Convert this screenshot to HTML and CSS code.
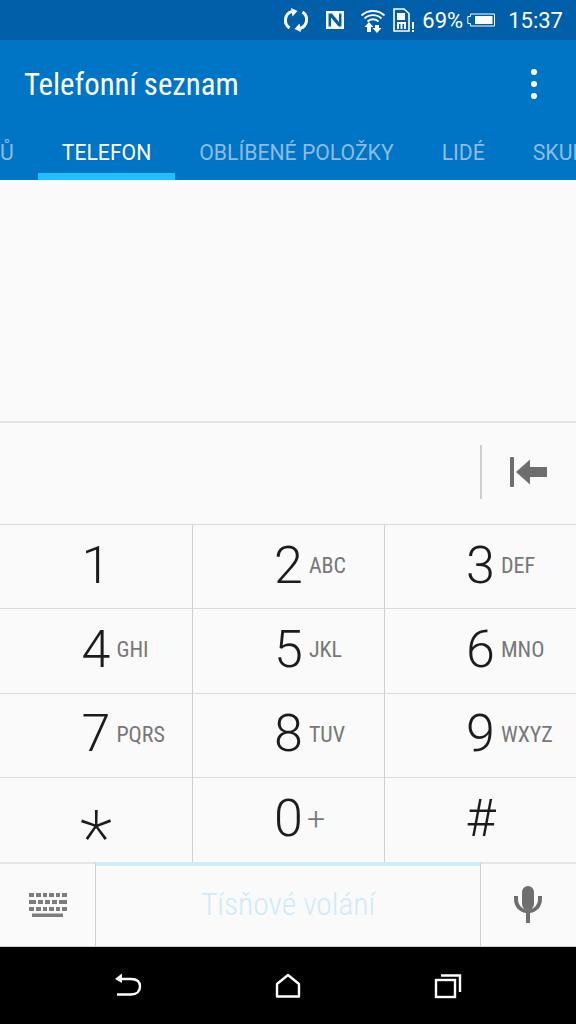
FILE: index.html
```html
<!DOCTYPE html>
<html lang="cs">
<head>
    <meta charset="UTF-8">
    <meta name="viewport" content="width=device-width, initial-scale=1.0">
    <title>Telefonní seznam</title>
    <link rel="stylesheet" href="styles.css">
</head>
<body>
    <div class="status-bar">
        <svg class="icon-sync" width="24" height="24" viewBox="0 0 24 24" fill="none" stroke="#fff" stroke-width="3">
            <path d="M5.500 20A9.300 9.300 0 0 1 8 3.400"/>
            <path d="M18.500 4A9.300 9.300 0 0 1 16 20.600"/>
            <path d="M7 0L13.500 3L8.500 8.500Z" fill="#fff" stroke="none"/>
            <path d="M17 24L10.500 21L15.500 15.500Z" fill="#fff" stroke="none"/>
        </svg>
        <svg class="icon-nfc" width="20" height="20" viewBox="0 0 20 20">
            <path fill="#fff" fill-rule="evenodd" d="M1 1H19V19H1ZM5 3.500H3.500V16.500H6V7.500L13.500 16.500H16.500V3.500H14V12L7 3.500Z"/>
        </svg>
        <svg class="icon-wifi" width="26" height="28" viewBox="0 0 26 28" fill="none" stroke="#fff" stroke-width="1.800">
            <path d="M1.500 9.500C7.500 3.500 18.500 3.500 24.500 9.500"/>
            <path d="M4.500 12.500C9 8 17 8 21.500 12.500"/>
            <path d="M7.500 15.500C10.500 12.500 15.500 12.500 18.500 15.500"/>
            <path fill="#fff" stroke="none" d="M7 20H11V26H7ZM15 19H19V22H21.500L17 27L12.500 22H15Z"/>
            <path fill="#fff" stroke="none" d="M4.500 21L9 16L13.500 21Z"/>
        </svg>
        <svg class="icon-sim" width="22" height="26" viewBox="0 0 22 26">
            <path fill="none" stroke="#fff" stroke-width="1.600" d="M1 2H11L16 6.500V24H1Z"/>
            <path fill="#fff" d="M4 6H12V13H4ZM4 15H13V22H11V17H9.500V22H7.500V17H6V22H4Z"/>
            <path fill="#fff" d="M19 15H21V22H19ZM19 23H21V25H19Z"/>
        </svg>
        <span class="battery-text">69%</span>
        <svg class="icon-battery" width="28" height="14" viewBox="0 0 28 14">
            <path fill="none" stroke="#fff" stroke-width="1" d="M3.500 1H27.500V13H3.500V10.500H0.800V3.500H3.500Z"/>
            <rect x="8" y="3" width="17.500" height="8" fill="#fff"/>
        </svg>
        <span class="clock">15:37</span>
    </div>

    <header class="app-bar">
        <div class="title-row">
            <span class="title">Telefonní seznam</span>
            <div class="menu-dots"><i></i><i></i><i></i></div>
        </div>
        <nav class="tabs">
            <span class="tab tab-prev">Ů</span>
            <span class="tab active">TELEFON</span>
            <span class="tab">OBLÍBENÉ POLOŽKY</span>
            <span class="tab">LIDÉ</span>
            <span class="tab">SKUPINY</span>
        </nav>
    </header>

    <div class="results"></div>

    <div class="number-row">
        <div class="backspace">
            <svg width="38" height="30" viewBox="0 0 38 30" fill="#6e6e6e">
                <rect x="0" y="0" width="4" height="30" rx="1"/>
                <path d="M6 15L20 2.500V10H37V20H20V27.500Z"/>
            </svg>
        </div>
    </div>

    <div class="keypad">
        <div class="key"><span class="digit">1</span></div>
        <div class="key"><span class="digit">2</span><span class="letters">ABC</span></div>
        <div class="key"><span class="digit">3</span><span class="letters">DEF</span></div>
        <div class="key"><span class="digit">4</span><span class="letters">GHI</span></div>
        <div class="key"><span class="digit">5</span><span class="letters">JKL</span></div>
        <div class="key"><span class="digit">6</span><span class="letters">MNO</span></div>
        <div class="key"><span class="digit">7</span><span class="letters">PQRS</span></div>
        <div class="key"><span class="digit">8</span><span class="letters">TUV</span></div>
        <div class="key"><span class="digit">9</span><span class="letters">WXYZ</span></div>
        <div class="key"><span class="digit star">*</span></div>
        <div class="key"><span class="digit">0</span><span class="letters plus">+</span></div>
        <div class="key"><span class="digit">#</span></div>
    </div>

    <div class="action-row">
        <div class="action-side">
            <svg width="38" height="24" viewBox="0 0 38 24" fill="#7d7d7d">
                <path d="M0 0H5V4H0ZM7 0H12V4H7ZM14 0H18V4H14ZM20 0H25V4H20ZM27 0H31V4H27ZM33 0H38V4H33Z"/>
                <path d="M0 7H7V11H0ZM9 7H14V11H9ZM16 7H21V11H16ZM23 7H28V11H23ZM30 7H38V11H30Z"/>
                <path d="M0 14H5V18H0ZM7 14H12V18H7ZM14 14H18V18H14ZM20 14H25V18H20ZM27 14H31V18H27ZM33 14H38V18H33Z"/>
                <rect x="3" y="20.500" width="31" height="3.500"/>
            </svg>
        </div>
        <div class="emergency">Tísňové volání</div>
        <div class="action-side">
            <svg width="28" height="38" viewBox="0 0 28 38" fill="#6e6e6e">
                <rect x="8" y="0" width="12" height="24" rx="6"/>
                <path d="M0 10H4V13C4 19 8 23.500 14 23.500C20 23.500 24 19 24 13V10H28V13C28 20.500 23 26 16 27V37H12V27C5 26 0 20.500 0 13Z"/>
            </svg>
        </div>
    </div>

    <div class="nav-bar">
        <svg width="30" height="26" viewBox="0 0 30 26" fill="none" stroke="#fff" stroke-width="2.400">
            <path d="M6 6H18C24 6 27 9 27 13.500C27 18 24 21.500 18 21.500H4"/>
            <path d="M9 0.500L2 6L9 10Z" fill="#fff" stroke="none"/>
        </svg>
        <svg width="26" height="26" viewBox="0 0 26 26" fill="none" stroke="#fff" stroke-width="2.400">
            <path d="M2 23.500V11L13 2L24 11V23.500Z" stroke-linejoin="round"/>
        </svg>
        <svg width="28" height="26" viewBox="0 0 28 26" fill="none" stroke="#fff" stroke-width="2.400">
            <rect x="2" y="7" width="19" height="17"/>
            <path d="M7 2.500H26V19"/>
        </svg>
    </div>
</body>
</html>
```

FILE: styles.css
```css
* {
    box-sizing: border-box;
}

body {
    margin: 0;
    width: 576px;
    height: 1024px;
    overflow: hidden;
    font-family: Roboto, "Liberation Sans", sans-serif;
    background-color: #fafafa;
    display: flex;
    flex-direction: column;
}

.status-bar {
    height: 40px;
    background-color: #005fa8;
    color: white;
    display: flex;
    align-items: center;
    justify-content: flex-end;
    padding-right: 13px;
    font-size: 22px;
}

.icon-sync {
    margin-right: 17px;
}

.icon-nfc {
    margin-right: 15px;
}

.icon-wifi {
    margin-right: 7px;
}

.icon-sim {
    margin-right: 7px;
}

.icon-battery {
    margin: 0 13px 0 4px;
}

.app-bar {
    height: 140px;
    background-color: #0074c5;
    color: white;
    display: flex;
    flex-direction: column;
    justify-content: space-between;
    overflow: hidden;
}

.title-row {
    display: flex;
    align-items: center;
    justify-content: space-between;
    height: 88px;
    padding: 0 39px 0 24px;
}

.title {
    font-size: 30.800px;
    font-stretch: 75%;
}

.menu-dots {
    display: flex;
    flex-direction: column;
    gap: 6px;
}

.menu-dots i {
    display: block;
    width: 6px;
    height: 6px;
    border-radius: 50%;
    background-color: white;
}

.tabs {
    display: flex;
    height: 52px;
    margin-left: -24px;
    white-space: nowrap;
    font-size: 21.200px;
    font-stretch: 91%;
    color: #8cbce2;
}

.tab {
    padding: 12px 24px 0;
    height: 52px;
}

.tab.active {
    color: white;
    border-bottom: 7px solid #1fc0fb;
}

.results {
    height: 243px;
    background-color: #fafafa;
    border-bottom: 2px solid #e4e4e4;
}

.number-row {
    height: 102px;
    display: flex;
    justify-content: flex-end;
    align-items: center;
    border-bottom: 1px solid #d8d8d8;
}

.backspace {
    width: 96px;
    height: 54px;
    margin-top: -3px;
    border-left: 2px solid #cfcfcf;
    display: flex;
    align-items: center;
    justify-content: center;
}

.keypad {
    display: grid;
    grid-template-columns: 193px 192px 191px;
    grid-auto-rows: 84.250px;
}

.key {
    display: grid;
    grid-template-columns: 1fr auto 1fr;
    align-items: center;
    column-gap: 6px;
    padding-bottom: 2px;
    border-right: 1px solid #d0d0d0;
    border-bottom: 1px solid #dcdcdc;
    color: #1c1c1c;
}

.key:nth-child(3n) {
    border-right: none;
}

.key:nth-last-child(-n+3) {
    border-bottom: none;
}

.digit {
    grid-column: 2;
    font-size: 52px;
    font-weight: 300;
    line-height: 1;
}

.star {
    font-size: 76px;
    font-weight: 200;
    margin-top: 22px;
}

.letters {
    grid-column: 3;
    font-size: 22px;
    font-stretch: 75%;
    color: #777;
}

.letters.plus {
    margin-left: -2px;
    font-size: 32px;
    font-weight: 300;
    font-stretch: 100%;
}

.action-row {
    height: 85px;
    display: grid;
    grid-template-columns: 96px 1fr 96px;
    flex: none;
}

.action-side {
    display: flex;
    align-items: center;
    justify-content: center;
    border-top: 2px solid #e4e4e4;
    border-bottom: 1px solid #d0d0d0;
}

.action-side:first-child {
    border-right: 1px solid #d0d0d0;
}

.action-side:last-child {
    border-left: 1px solid #d0d0d0;
    padding-right: 2px;
}

.emergency {
    display: flex;
    align-items: center;
    justify-content: center;
    border-top: 4px solid #cfeaf8;
    border-bottom: 1px solid #d0d0d0;
    padding-bottom: 4px;
    font-size: 31.500px;
    font-stretch: 75%;
    font-weight: 300;
    color: #cfeaf8;
}

.nav-bar {
    flex: 1;
    background-color: black;
    display: grid;
    grid-template-columns: repeat(3, 160px);
    justify-content: center;
    justify-items: center;
    align-items: center;
}
```
